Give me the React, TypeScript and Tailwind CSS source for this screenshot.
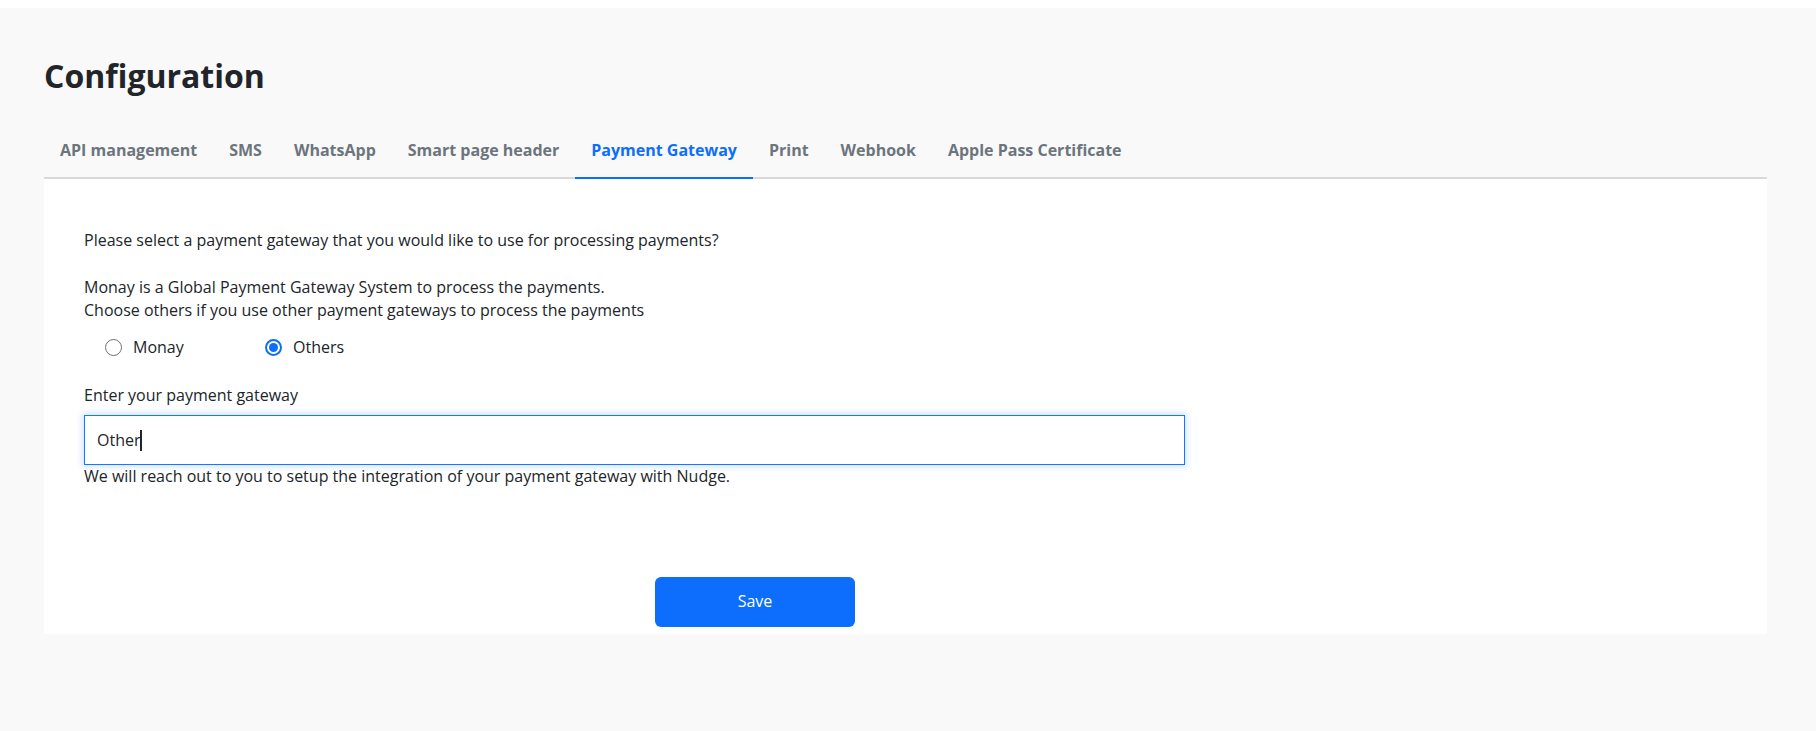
import React from "react";

const tabs = [
  "API management",
  "SMS",
  "WhatsApp",
  "Smart page header",
  "Payment Gateway",
  "Print",
  "Webhook",
  "Apple Pass Certificate",
];

function Radio({ checked }: { checked: boolean }) {
  if (checked) {
    return (
      <span className="flex h-[17px] w-[17px] items-center justify-center rounded-full border-2 border-[#0d6efd] bg-white">
        <span className="h-[9px] w-[9px] rounded-full bg-[#0d6efd]" />
      </span>
    );
  }
  return <span className="h-[17px] w-[17px] rounded-full border-[1.5px] border-[#6f6f6f] bg-white" />;
}

export default function App() {
  return (
    <div
      className="min-h-screen bg-white pt-2 text-[#212529]"
      style={{ fontFamily: '"Open Sans", "Noto Sans", "Liberation Sans", sans-serif' }}
    >
      <div className="min-h-[723px] bg-[#f9f9f9] pl-[44px] pr-[49px] pt-[49px]">
        <h1 className="text-[32px] font-bold leading-[38.4px] text-[#212529]">Configuration</h1>

        <div className="mt-[27px] flex border-b-2 border-[#d9d9d9]">
          {tabs.map((t) => {
            const active = t === "Payment Gateway";
            return (
              <div
                key={t}
                className={
                  active
                    ? "-mb-[2px] border-b-2 border-[#0d6efd] px-4 pb-[15px] pt-4 text-[16px] font-bold leading-6 text-[#0d6efd]"
                    : "-mb-[2px] border-b-2 border-transparent px-4 pb-[15px] pt-4 text-[16px] font-bold leading-6 text-[#6c757d]"
                }
              >
                {t}
              </div>
            );
          })}
        </div>

        <div className="bg-white px-10 pb-[7px] pt-[50px] text-[16px] leading-[23px]">
          <p>Please select a payment gateway that you would like to use for processing payments?</p>
          <p className="mt-[24px]">Monay is a Global Payment Gateway System to process the payments.</p>
          <p>Choose others if you use other payment gateways to process the payments</p>

          <div className="mt-[14px] flex items-center pl-[21px]">
            <label className="flex w-[160px] items-center gap-[11px]">
              <Radio checked={false} />
              <span>Monay</span>
            </label>
            <label className="flex items-center gap-[11px]">
              <Radio checked={true} />
              <span>Others</span>
            </label>
          </div>

          <div className="mt-[24.5px]">Enter your payment gateway</div>
          <div className="mt-[8.5px] flex h-[50px] w-[1101px] items-center border border-[#1479fb] bg-white px-3 shadow-[0_0_6px_2px_rgba(13,110,253,0.18)]">
            <span>Other</span>
            <span className="h-[21px] w-[2px] bg-[#212529]" />
          </div>
          <div>We will reach out to you to setup the integration of your payment gateway with Nudge.</div>

          <button className="ml-[571px] mt-[88.5px] flex h-[50px] w-[200px] items-center justify-center rounded-[6px] bg-[#0d6efd] text-[16px] text-white">
            Save
          </button>
        </div>
      </div>
    </div>
  );
}
